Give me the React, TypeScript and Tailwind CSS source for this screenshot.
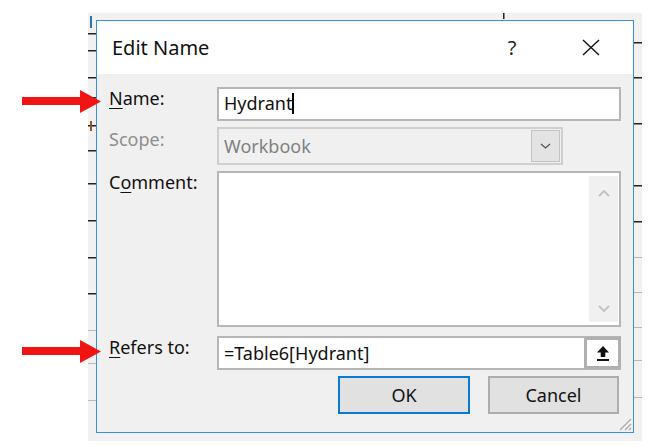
import React from 'react';

const font = { fontFamily: '"Noto Sans", "Open Sans", sans-serif' };

function RedArrow({ top }: { top: number }) {
  return (
    <svg
      className="absolute left-[22px]"
      style={{ top }}
      width="79"
      height="23"
      viewBox="0 0 79 23"
    >
      <rect x="0" y="7" width="60" height="8" fill="#f01414" />
      <polygon points="58,0 79,11.5 58,23" fill="#f01414" />
    </svg>
  );
}

function SheetBehind() {
  const leftBlack = [33, 50, 77, 97, 125, 150, 183, 220, 257, 293];
  const leftGray = [330, 363, 400];
  const rightBlack = [42, 77, 123, 185, 221];
  const rightGray = [257, 292, 327, 360, 397];
  return (
    <div className="absolute left-[88px] top-[13px] w-[554px] h-[428px] bg-[#f1f1f1]">
      <svg className="absolute inset-0" width="554" height="428">
        {leftBlack.map((y) => (
          <rect key={'lb' + y} x="0" y={y - 13} width="8" height="1.5" fill="#222" />
        ))}
        {leftGray.map((y) => (
          <rect key={'lg' + y} x="0" y={y - 13} width="8" height="1" fill="#b8b8b8" />
        ))}
        {rightBlack.map((y) => (
          <rect key={'rb' + y} x="546" y={y - 13} width="8" height="1.5" fill="#222" />
        ))}
        {rightGray.map((y) => (
          <rect key={'rg' + y} x="546" y={y - 13} width="8" height="1" fill="#b8b8b8" />
        ))}
        <rect x="415" y="0" width="1.5" height="6" fill="#222" />
        <rect x="2" y="3" width="2" height="12" fill="#2f6fb8" />
        <rect x="2" y="108" width="2" height="10" fill="#8a5a2a" />
      </svg>
    </div>
  );
}

function Chevron({ up, color, w = 12, h = 7, sw = 2 }: { up?: boolean; color: string; w?: number; h?: number; sw?: number }) {
  return (
    <svg width={w} height={h} viewBox={`0 0 ${w} ${h}`}>
      <polyline
        points={up ? `1,${h - 1} ${w / 2},1 ${w - 1},${h - 1}` : `1,1 ${w / 2},${h - 1} ${w - 1},1`}
        fill="none"
        stroke={color}
        strokeWidth={sw}
      />
    </svg>
  );
}

export default function App() {
  return (
    <div className="relative w-[650px] h-[447px] bg-white overflow-hidden" style={font}>
      <SheetBehind />

      <div className="absolute left-[96px] top-[20px] w-[538px] h-[413px] border border-[#3a8ee0] bg-[#f0f0f0] flex flex-col text-[18px] text-[#111]">
        {/* title bar */}
        <div className="h-[53px] bg-white flex items-center pl-[15px] pr-[22px] shrink-0">
          <span className="text-[20px] leading-none text-[#111]">Edit Name</span>
          <div className="ml-auto flex items-center">
            <div className="w-[60px] flex justify-center text-[20px] leading-none text-[#222]">?</div>
            <div className="w-[40px] ml-[29px] flex justify-center">
              <svg width="18" height="17" viewBox="0 0 18 17">
                <path d="M1 1 L17 16 M17 1 L1 16" stroke="#111" strokeWidth="1.4" fill="none" />
              </svg>
            </div>
          </div>
        </div>

        {/* body */}
        <div className="flex-1 pt-[13px] pl-[12px] pr-[12px] flex flex-col leading-[24px]">
          <div className="grid grid-cols-[108px_404px] gap-y-[6px]">
            <div className="-mt-[1px]">
              <span className="underline underline-offset-[3px]">N</span>ame:
            </div>
            <div className="h-[34px] bg-white border-2 border-[#b6b6b6] pl-[5px] pt-[2px] flex items-start">
              <span>Hydrant</span>
              <span className="w-[1.5px] h-[21px] bg-black mt-[2px]" />
            </div>

            <div className="-mt-[1px] text-[#8e8e8e] pt-[1px]">Scope:</div>
            <div className="flex">
              <div className="w-[346px] h-[38px] border-2 border-[#cfcfcf] bg-[#f0f0f0] flex items-center pl-[5px] pr-[1px]">
                <span className="text-[#808080] flex-1">Workbook</span>
                <div className="w-[29px] h-[32px] bg-[#e3e3e3] border border-[#c4c4c4] flex items-center justify-center">
                  <Chevron color="#555" w={11} h={6} sw={1.3} />
                </div>
              </div>
            </div>

            <div className="-mt-[1px]">
              C<span className="underline underline-offset-[3px]">o</span>mment:
            </div>
            <div className="h-[156px] bg-white border-2 border-[#b6b6b6] flex justify-end p-[3px] pr-[1px]">
              <div className="w-[29px] bg-[#f0f0f0] flex flex-col items-center justify-between pt-[14px] pb-[10px]">
                <Chevron up color="#c4c4c4" />
                <Chevron color="#c4c4c4" />
              </div>
            </div>
          </div>

          <div className="grid grid-cols-[108px_404px] mt-[9px]">
            <div className="-mt-[1px]">
              <span className="underline underline-offset-[3px]">R</span>efers to:
            </div>
            <div className="h-[34px] bg-white border-2 border-[#b6b6b6] flex items-center pl-[5px]">
              <span className="flex-1">=Table6[Hydrant]</span>
              <div className="w-[37px] h-[32px] -mr-[2px] border-[3px] border-[#b0b0b0] bg-white flex items-center justify-center">
                <svg width="12" height="15" viewBox="0 0 12 15">
                  <path d="M6 0 L12 6.5 H8.3 V11 H3.7 V6.5 H0 Z" fill="#111" />
                  <rect x="0" y="13" width="12" height="2" fill="#111" />
                </svg>
              </div>
            </div>
          </div>

          <div className="flex justify-end gap-[18px] mt-[6px] pr-[2px]">
            <div className="w-[132px] h-[38px] border-2 border-[#0b78d6] bg-[#e1e1e1] flex items-center justify-center">
              OK
            </div>
            <div className="w-[131px] h-[38px] border-2 border-[#adadad] bg-[#e1e1e1] flex items-center justify-center">
              Cancel
            </div>
          </div>
        </div>

        <svg className="absolute right-[1px] bottom-[1px]" width="16" height="16" viewBox="0 0 16 16">
          <path d="M15 4 L4 15 M15 9 L9 15 M15 13 L13 15" stroke="#a8a8a8" strokeWidth="1.2" fill="none" />
        </svg>
      </div>

      <RedArrow top={90} />
      <RedArrow top={340} />
    </div>
  );
}
